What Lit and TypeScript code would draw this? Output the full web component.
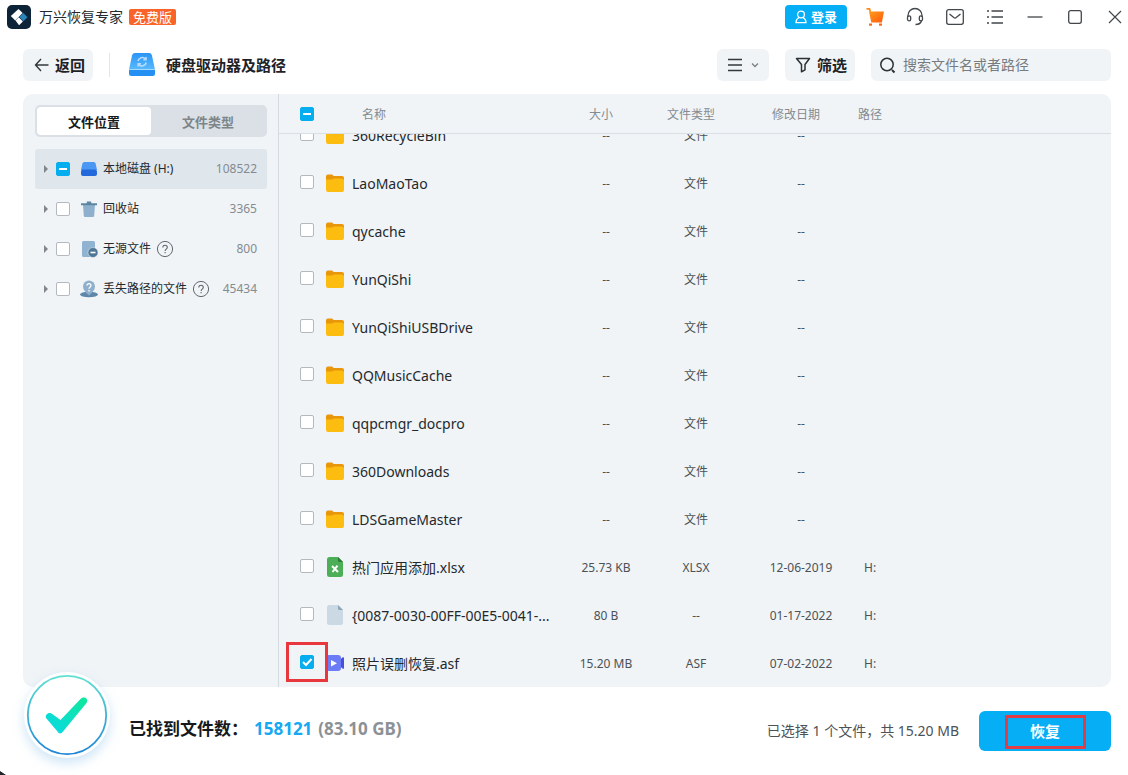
import { LitElement, html, css, svg, nothing, TemplateResult } from "lit";
import { customElement, property, query } from "lit/decorators.js";
import { classMap } from "lit/directives/class-map.js";

type FileKind = "folder" | "sheet" | "blank" | "video";

interface FileRow {
  name: string;
  kind: FileKind;
  size: string;
  type: string;
  date: string;
  path: string;
  checked?: boolean;
}

interface TreeNode {
  label: string;
  count: string;
  icon: "disk" | "trash" | "orphan" | "lost";
  help?: boolean;
  selected?: boolean;
}

const folder = (name: string): FileRow => ({
  name,
  kind: "folder",
  size: "--",
  type: "文件",
  date: "--",
  path: "",
});

const FILES: FileRow[] = [
  folder("360RecycleBin"),
  folder("LaoMaoTao"),
  folder("qycache"),
  folder("YunQiShi"),
  folder("YunQiShiUSBDrive"),
  folder("QQMusicCache"),
  folder("qqpcmgr_docpro"),
  folder("360Downloads"),
  folder("LDSGameMaster"),
  { name: "热门应用添加.xlsx", kind: "sheet", size: "25.73 KB", type: "XLSX", date: "12-06-2019", path: "H:" },
  { name: "{0087-0030-00FF-00E5-0041-...", kind: "blank", size: "80 B", type: "--", date: "01-17-2022", path: "H:" },
  { name: "照片误删恢复.asf", kind: "video", size: "15.20 MB", type: "ASF", date: "07-02-2022", path: "H:", checked: true },
];

const TREE: TreeNode[] = [
  { label: "本地磁盘 (H:)", count: "108522", icon: "disk", selected: true },
  { label: "回收站", count: "3365", icon: "trash" },
  { label: "无源文件", count: "800", icon: "orphan", help: true },
  { label: "丢失路径的文件", count: "45434", icon: "lost", help: true },
];

const icon = (w: number, h: number, body: unknown) =>
  html`<svg width=${w} height=${h} viewBox="0 0 ${w} ${h}" fill="none" aria-hidden="true">${body}</svg>`;

const FILE_ICONS: Record<FileKind, TemplateResult> = {
  folder: icon(20, 20, svg`
    <path d="M1 3.500a2 2 0 0 1 2-2h3.600c.7 0 1.100.4 1.600.9.4.4.8.6 1.400.6H17a2 2 0 0 1 2 2V9H1z" fill="#e8960c"/>
    <path d="M1 6.600h4.800c.8 0 1.300-.2 1.900-.6.5-.3 1-.5 1.600-.5H17a2 2 0 0 1 2 2v9.500a2 2 0 0 1-2 2H3a2 2 0 0 1-2-2z" fill="#fdbc10"/>`),
  sheet: icon(20, 20, svg`
    <path d="M2 2.500A2.500 2.500 0 0 1 4.500 0H13l5 5v12.500a2.500 2.500 0 0 1-2.500 2.500h-11A2.500 2.500 0 0 1 2 17.500z" fill="#4caf58"/>
    <path d="M13 0l5 5h-3.500A1.500 1.500 0 0 1 13 3.500z" fill="#2a7c39"/>
    <path d="M7 9l6 6M12.500 8.600L7.500 15" stroke="#fff" stroke-width="2"/>`),
  blank: icon(20, 20, svg`
    <path d="M2 2.500A2.500 2.500 0 0 1 4.500 0H13l5 5v12.500a2.500 2.500 0 0 1-2.500 2.500h-11A2.500 2.500 0 0 1 2 17.500z" fill="#cbd9e4"/>
    <path d="M13 0l5 5h-3.500A1.500 1.500 0 0 1 13 3.500z" fill="#8fa7b5"/>`),
  video: icon(20, 20, svg`
    <path d="M14 7.500l3.500-3c.8-.6 1.500-.3 1.500.6v9.800c0 .9-.7 1.200-1.500.6l-3.500-3z" fill="#4a4ed8"/>
    <rect x="1" y="2" width="15" height="16" rx="3" fill="#6b7cf6"/>
    <path d="M6 7l6 3.200L6 13.500z" fill="#fff"/>`),
};

const TREE_ICONS: Record<TreeNode["icon"], TemplateResult> = {
  disk: icon(18, 18, svg`
    <path d="M4.300 2h9.400a2 2 0 0 1 1.900 1.500L17 10H1l1.400-6.500A2 2 0 0 1 4.300 2z" fill="#4a98f4"/>
    <rect x="1" y="9.500" width="16" height="6.500" rx="2" fill="#2369dc"/>`),
  trash: icon(18, 18, svg`
    <path d="M3 4.500h12l-.8 11.300a1.300 1.300 0 0 1-1.300 1.200H5.100a1.300 1.300 0 0 1-1.300-1.200z" fill="#8fb0cc"/>
    <path d="M1 3.200h5.800V1.500h4.400v1.700H17v2H1z" fill="#5e84a3"/>`),
  orphan: icon(18, 18, svg`
    <path d="M2 2.500A1.500 1.500 0 0 1 3.500 1h10A1.500 1.500 0 0 1 15 2.500V16a1 1 0 0 1-1 1H3.500A1.500 1.500 0 0 1 2 15.500z" fill="#8fb3d0"/>
    <circle cx="13" cy="12.500" r="5" fill="#4f7898" stroke="#f0f3f6" stroke-width="0.500"/>
    <path d="M10.500 12.500h5" stroke="#fff" stroke-width="1.600"/>`),
  lost: icon(18, 18, svg`
    <ellipse cx="9" cy="14.500" rx="9" ry="2.800" fill="#5e86a8"/>
    <path d="M9 15.500C5.500 12.500 3 9.800 3 6.500a6 6 0 0 1 12 0c0 3.300-2.500 6-6 9z" fill="#8fb0cc"/>
    <path d="M7 5.600c0-2.600 4-2.500 4 0 0 1.600-2 1.500-2 3.100M9 10v1.400" stroke="#fff" stroke-width="1.300"/>`),
};

const helpIcon = icon(18, 18, svg`
  <circle cx="9" cy="9" r="7.600" stroke="#63686d"/>
  <path d="M6.800 7.400c0-3 4.500-2.900 4.500 0 0 1.700-2.200 1.700-2.200 3.500M9.100 12v1.300" stroke="#63686d" stroke-width="1.100"/>`);

const FONT = css`"Noto Sans", "Noto Sans CJK SC", sans-serif`;

const shared = css`
  * { box-sizing: border-box; }
  svg { display: block; flex: none; }
  button { font: inherit; color: inherit; border: 0; margin: 0; padding: 0; background: none; cursor: pointer; }
  input[type="checkbox"] {
    appearance: none;
    display: block;
    flex: none;
    width: 14px;
    height: 14px;
    margin: 0;
    border: 1px solid #b3b9bf;
    border-radius: 2px;
    background: #fff;
  }
  input[type="checkbox"]:checked,
  input[type="checkbox"]:indeterminate {
    border-color: #06aef0;
    background: #06aef0 center / 14px 14px no-repeat;
  }
  input[type="checkbox"]:checked {
    background-image: url("data:image/svg+xml,%3Csvg xmlns='http://www.w3.org/2000/svg' viewBox='0 0 14 14'%3E%3Cpath d='M3 7l3 3 5.500-6' fill='none' stroke='white' stroke-width='2'/%3E%3C/svg%3E");
  }
  input[type="checkbox"]:indeterminate {
    background-image: url("data:image/svg+xml,%3Csvg xmlns='http://www.w3.org/2000/svg' viewBox='0 0 14 14'%3E%3Cpath d='M3 7h8' stroke='white' stroke-width='2'/%3E%3C/svg%3E");
  }
`;

@customElement("title-bar")
export class TitleBar extends LitElement {
  static styles = [shared, css`
    :host { display: flex; align-items: center; gap: 16px; height: 34px; padding: 0 1px 0 7px; }
    .brand { display: flex; align-items: center; gap: 8px; flex: 1; color: #24292d; font-size: 14px; line-height: 20px; }
    .badge { padding: 0 4px; margin-left: -2px; border-radius: 2px; background: #fa6428; color: #fff; font-size: 13px; line-height: 16px; }
    .login { display: flex; align-items: center; justify-content: center; gap: 4px; width: 62px; height: 24px; border-radius: 4px; background: #06aef6; color: #fff; font-size: 13px; line-height: 18px; font-weight: 700; }
    .tool { display: flex; align-items: center; justify-content: center; width: 24px; height: 24px; }
  `];

  private tool(label: string, body: unknown) {
    return html`<button class="tool" aria-label=${label}>${icon(20, 20, body)}</button>`;
  }

  render() {
    return html`
      <div class="brand">
        ${icon(24, 24, svg`
          <rect width="24" height="24" rx="5" fill="#0d2438"/>
          <path d="M3.800 11l7.700-7 4.200 4-7.500 7.400z" fill="#fff"/>
          <path d="M8.500 15.500l3.200-3.200 4.200 4.100-3.800 3.800z" fill="#fff"/>
          <path d="M12.300 12l4-4 4.200 4.200-4.200 4z" fill="#2a86b8"/>`)}
        <span>万兴恢复专家</span>
        <span class="badge">免费版</span>
      </div>
      <button class="login">
        ${icon(12, 14, svg`<circle cx="6" cy="4.500" r="3.400" stroke="#fff" stroke-width="1.300"/><path d="M4 7.500C2 8.500 1 10.300 1 12.600h10c0-2.300-1-4.100-3-5.100" stroke="#fff" stroke-width="1.300"/>`)}
        登录
      </button>
      ${this.tool("购物车", svg`
        <defs><linearGradient id="cart" x1="0" y1="0" x2="1" y2="1"><stop stop-color="#ff9a1c"/><stop offset="1" stop-color="#ff5a0a"/></linearGradient></defs>
        <path d="M1.500 1.800h3l.8 3" stroke="#ff8a16" stroke-width="1.700"/>
        <path d="M4 4.500H19l-2.100 11H6.300z" fill="url(#cart)"/>
        <rect x="4" y="16.500" width="3" height="2.200" fill="#fa6a14"/><rect x="14" y="16.500" width="3" height="2.200" fill="#fa6a14"/>`)}
      ${this.tool("客服", svg`
        <path d="M3 10V8.500a7 7 0 0 1 14 0V10" stroke="#42474b" stroke-width="1.300"/>
        <rect x="2.500" y="8.800" width="3.200" height="5" rx="1.600" stroke="#42474b" stroke-width="1.300"/>
        <rect x="14.300" y="8.800" width="3.200" height="5" rx="1.600" stroke="#42474b" stroke-width="1.300"/>
        <path d="M16.500 13.500c-.5 2.500-2.500 4-6 4" stroke="#42474b" stroke-width="1.300"/>`)}
      ${this.tool("邮件", svg`
        <rect x="1.700" y="2.700" width="16.600" height="14.600" rx="2" stroke="#42474b" stroke-width="1.300"/>
        <path d="M4.500 7l4.300 3.600c.8.600 1.600.6 2.400 0L15.500 7" stroke="#42474b" stroke-width="1.300"/>`)}
      ${this.tool("菜单", svg`
        <path d="M2 4h2M2 10h2M2 16h2M6.500 4H18M6.500 10H18M6.500 16H18" stroke="#42474b" stroke-width="1.400"/>`)}
      ${this.tool("最小化", svg`<path d="M2.500 10h15" stroke="#42474b" stroke-width="1.300"/>`)}
      ${this.tool("最大化", svg`<rect x="3.700" y="3.700" width="12.600" height="12.600" rx="2" stroke="#42474b" stroke-width="1.300"/>`)}
      ${this.tool("关闭", svg`<path d="M4 4l12 12M16 4L4 16" stroke="#42474b" stroke-width="1.200"/>`)}
    `;
  }
}

@customElement("tool-bar")
export class ToolBar extends LitElement {
  static styles = [shared, css`
    :host { display: flex; align-items: center; gap: 16px; padding: 15px 17px 13px 23px; color: #1e2226; font-size: 15px; }
    .chip { display: flex; align-items: center; justify-content: center; height: 32px; border-radius: 6px; background: #f0f4f7; line-height: 22px; font-weight: 700; }
    .back { width: 70px; gap: 4px; }
    .view { width: 52px; gap: 4px; }
    .filter { width: 70px; gap: 4px; }
    .divider { width: 1px; height: 24px; background: #e2e6ea; }
    .place { display: flex; flex: 1; align-items: center; gap: 10px; margin: 0 0 0 2px; font-size: 15px; line-height: 22px; font-weight: 700; }
    .search { display: flex; align-items: center; gap: 6px; width: 240px; height: 32px; padding: 0 8px; border-radius: 6px; background: #f0f4f7; }
    .search input { flex: 1; min-width: 0; padding: 0; border: 0; outline: 0; background: none; color: #1e2226; font: inherit; font-size: 14px; line-height: 20px; }
    .search input::placeholder { color: #777c81; opacity: 1; }
  `];

  render() {
    return html`
      <button class="chip back">
        ${icon(20, 20, svg`<path d="M17.500 10H4.500M10 4L4.500 10l5.500 6" stroke="#33383c" stroke-width="1.400"/>`)}返回
      </button>
      <span class="divider"></span>
      <h1 class="place">
        ${icon(28, 26, svg`
          <defs><linearGradient id="drv" x1="0" y1="0" x2="0" y2="1"><stop stop-color="#2b94f6"/><stop offset="1" stop-color="#58bafc"/></linearGradient></defs>
          <path d="M7 1h14a3 3 0 0 1 2.900 2.300L27 17.500H1L4.100 3.300A3 3 0 0 1 7 1z" fill="url(#drv)"/>
          <path d="M1 17.500h26v4a2.500 2.500 0 0 1-2.500 2.500h-21A2.500 2.500 0 0 1 1 21.500z" fill="#2490f4"/>
          <path d="M1 17.500h26" stroke="#a5dbff"/>
          <path d="M10 9a4.200 4.200 0 0 1 7.400-1.900M18 5v2.700h-2.700M18.200 10.500a4.200 4.200 0 0 1-7.400 1.900M10.200 14.500v-2.700h2.700" stroke="#b5dcff" stroke-width="1.600"/>`)}
        硬盘驱动器及路径
      </h1>
      <button class="chip view" aria-label="视图">
        ${icon(20, 20, svg`<path d="M3 4.500h14M3 10h14M3 15.500h14" stroke="#33383c" stroke-width="1.600"/>`)}
        ${icon(12, 12, svg`<path d="M3 4.500l3 3 3-3" stroke="#7a7f84" stroke-width="1.300"/>`)}
      </button>
      <button class="chip filter">
        ${icon(20, 20, svg`<path d="M3.500 3.500h13L12 9.500v5.300l-3.500 2V9.500z" stroke="#2c3135" stroke-width="1.500" stroke-linejoin="round"/>`)}筛选
      </button>
      <label class="search">
        ${icon(18, 18, svg`<circle cx="8" cy="8.500" r="6.200" stroke="#2c3135" stroke-width="1.500"/><path d="M13 14l2.500 2.500" stroke="#2c3135" stroke-width="2"/>`)}
        <input type="text" aria-label="搜索" placeholder="搜索文件名或者路径" />
      </label>
    `;
  }
}

@customElement("location-tree")
export class LocationTree extends LitElement {
  static styles = [shared, css`
    :host { display: block; width: 256px; flex: none; padding: 11px 11px 0 12px; border-right: 1px solid #d3dbe1; }
    .tabs { display: flex; height: 32px; padding: 2px; border-radius: 5px; background: #dae0e6; font-size: 13px; font-weight: 700; }
    .tab { flex: 1; border-radius: 4px; color: #7e8589; }
    .tab.active { background: #fff; color: #16191c; }
    .nodes { list-style: none; margin: 12px 0 0; padding: 0; }
    .node { display: flex; align-items: center; height: 40px; padding: 0 10px 0 8px; border-radius: 3px; color: #24292d; font-size: 12px; line-height: 18px; }
    .node.selected { background: #dfe6ec; }
    .caret { margin-right: 8px; }
    .pick { display: flex; align-items: center; }
    .pick svg { margin: 0 5px 0 10px; }
    .help { margin-left: 5px; }
    .count { margin-left: auto; color: #858b90; }
  `];

  render() {
    return html`
      <div class="tabs" role="tablist">
        <button class="tab active" role="tab" aria-selected="true">文件位置</button>
        <button class="tab" role="tab" aria-selected="false">文件类型</button>
      </div>
      <ul class="nodes">
        ${TREE.map((n) => html`
          <li class=${classMap({ node: true, selected: !!n.selected })}>
            <button class="caret" aria-label="展开">
              ${icon(5, 10, svg`<path d="M1 1l4 4-4 4z" fill="#80868b"/>`)}
            </button>
            <label class="pick">
              <input type="checkbox" .indeterminate=${!!n.selected} />
              ${TREE_ICONS[n.icon]}
              <span>${n.label}</span>
            </label>
            ${n.help ? html`<button class="help" aria-label="帮助">${helpIcon}</button>` : nothing}
            <span class="count">${n.count}</span>
          </li>`)}
      </ul>
    `;
  }
}

@customElement("file-table")
export class FileTable extends LitElement {
  @property({ attribute: false }) rows: FileRow[] = [];
  @query(".scroller") private scroller!: HTMLElement;

  static styles = [shared, css`
    :host { display: flex; flex: 1; min-width: 0; min-height: 0; }
    .scroller { flex: 1; overflow: auto; scrollbar-width: none; border-radius: 0 10px 10px 0; }
    table { width: 100%; border-collapse: separate; border-spacing: 0; table-layout: fixed; color: #4c5256; font-size: 12px; line-height: 18px; }
    th, td { padding: 0; text-align: center; white-space: nowrap; }
    th { position: sticky; top: 0; z-index: 2; height: 40px; padding-top: 2px; padding-right: 10px; border-bottom: 1px solid #d8e0e5; background: #f0f4f7; color: #858b90; font-weight: 400; }
    td { height: 48px; padding-top: 2px; }
    .c-pick { width: 47px; }
    .c-name { width: 240px; }
    .c-size { width: 80px; }
    .c-type { width: 100px; }
    .c-date { width: 110px; }
    .pick { padding: 0 0 0 21px; }
    td.pick { position: relative; padding-bottom: 2px; }
    .name { text-align: left; }
    th.name { padding-left: 36px; }
    td.name { padding-top: 0; }
    .file { display: flex; align-items: center; gap: 7px; margin-left: -1px; color: #24292d; font-size: 14px; line-height: 20px; }
    .file span { padding-top: 2px; }
    .path { text-align: left; }
    th.path { padding-left: 2px; }
    td.path { padding-left: 8px; }
    .marker { position: absolute; z-index: 1; top: 3px; left: 7px; width: 42px; height: 40px; border: 3px solid #e8383e; pointer-events: none; }
  `];

  protected firstUpdated() {
    this.scroller.scrollTop = this.scroller.scrollHeight;
  }

  render() {
    return html`
      <div class="scroller">
        <table>
          <colgroup>
            <col class="c-pick" /><col class="c-name" /><col class="c-size" />
            <col class="c-type" /><col class="c-date" /><col />
          </colgroup>
          <thead>
            <tr>
              <th class="pick"><input type="checkbox" aria-label="全选" .indeterminate=${true} /></th>
              <th class="name">名称</th>
              <th>大小</th>
              <th>文件类型</th>
              <th>修改日期</th>
              <th class="path">路径</th>
            </tr>
          </thead>
          <tbody>
            ${this.rows.map((r, i) => html`
              <tr>
                <td class="pick">
                  <input id="f${i}" type="checkbox" .checked=${!!r.checked} />
                  ${r.checked ? html`<span class="marker"></span>` : nothing}
                </td>
                <td class="name"><label class="file" for="f${i}">${FILE_ICONS[r.kind]}<span>${r.name}</span></label></td>
                <td>${r.size}</td>
                <td>${r.type}</td>
                <td>${r.date}</td>
                <td class="path">${r.path}</td>
              </tr>`)}
          </tbody>
        </table>
      </div>
    `;
  }
}

@customElement("status-bar")
export class StatusBar extends LitElement {
  static styles = [shared, css`
    :host { display: flex; align-items: center; height: 88px; padding: 0 17px 0 23px; }
    .seal { position: relative; z-index: 3; flex: none; width: 88px; height: 88px; margin: -32px 18px 0 0; border-radius: 50%; }
    .seal svg { overflow: visible; filter: drop-shadow(0 5px 6px rgba(60, 150, 220, 0.25)); }
    .found { display: flex; flex: 1; align-items: center; gap: 6px; margin: 0; padding-bottom: 4px; color: #16191c; font-size: 17px; line-height: 24px; font-weight: 700; }
    .total { color: #14a9f2; }
    .bytes { color: #8c9196; }
    .chosen { margin: 0 20px 0 0; color: #4c5256; font-size: 14px; line-height: 20px; }
    .recover { position: relative; width: 132px; height: 40px; border-radius: 6px; background: #06aef6; color: #fff; font-size: 15px; line-height: 22px; font-weight: 700; }
    .marker { position: absolute; top: 4px; left: 26px; width: 81px; height: 34px; border: 3px solid #e23c46; }
  `];

  render() {
    return html`
      <div class="seal">
        ${icon(88, 88, svg`
          <defs>
            <linearGradient id="ring" x1="0" y1="0" x2="0" y2="1"><stop stop-color="#5fe0d0"/><stop offset="1" stop-color="#1f86d8"/></linearGradient>
            <linearGradient id="tick" x1="0" y1="1" x2="1" y2="0"><stop stop-color="#08d8e8"/><stop offset="1" stop-color="#10e89a"/></linearGradient>
          </defs>
          <circle cx="44" cy="44" r="43" fill="#fff"/>
          <circle cx="44" cy="44" r="39.200" stroke="url(#ring)" stroke-width="1.800"/>
          <path d="M23 47c-1-3 2-6 5.500-4.500l9 6.500 20-21c4-3.500 8.500 0 6 4L40 60.500c-2 2.500-4 2.500-5.500 0z" fill="url(#tick)"/>`)}
      </div>
      <p class="found">
        <span>已找到文件数：</span><span class="total">158121</span><span class="bytes">(83.10 GB)</span>
      </p>
      <p class="chosen">已选择 1 个文件，共 15.20 MB</p>
      <button class="recover">恢复<span class="marker"></span></button>
    `;
  }
}

@customElement("app-root")
export class AppRoot extends LitElement {
  static styles = [shared, css`
    :host { position: relative; display: flex; flex-direction: column; height: 100vh; overflow: hidden; background: #fff; font-family: ${FONT}; }
    .panel { display: flex; flex: 1; min-height: 0; margin: 0 17px 0 23px; border-radius: 10px; background: #f0f4f7; }
    .corner { position: absolute; left: 0; bottom: 0; width: 6px; height: 4px; background: linear-gradient(to top right, #22262a 45%, transparent 55%); }
  `];

  render() {
    return html`
      <title-bar></title-bar>
      <tool-bar></tool-bar>
      <main class="panel">
        <location-tree></location-tree>
        <file-table .rows=${FILES}></file-table>
      </main>
      <status-bar></status-bar>
      <span class="corner"></span>
    `;
  }
}
